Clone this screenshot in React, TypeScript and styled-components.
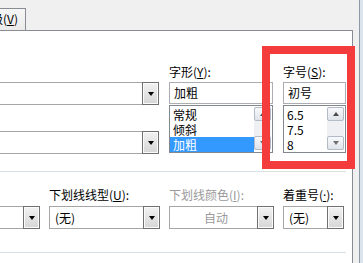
import React from "react";
import styled, { createGlobalStyle } from "styled-components";

const GlobalStyle = createGlobalStyle`
  html, body { margin: 0; padding: 0; background: #f0f0f0; }
  body {
    font-family: "Noto Sans CJK SC", "Noto Sans", sans-serif;
    font-size: 12px;
    color: #000;
  }
`;

const Frame = styled.div`
  position: relative;
  display: flex;
  width: 363px;
  height: 263px;
  overflow: hidden;
`;

const DialogArea = styled.div`
  display: flex;
  flex-direction: column;
  width: 359px;
  background: #f0f0f0;
`;

const EdgeLine = styled.div`
  width: 1px;
  background: #8e99a6;
`;

const Outside = styled.div`
  flex: 1;
  background: #dbe3ec;
`;

const TabStrip = styled.div`
  display: flex;
  align-items: flex-end;
  height: 30px;
`;

const Tab = styled.div`
  box-sizing: border-box;
  margin-left: -40px;
  width: 66px;
  height: 22px;
  padding-right: 7px;
  border: 1px solid #898c95;
  border-bottom: none;
  background: linear-gradient(#f6f6f6, #ebebeb);
  text-align: right;
  line-height: 20px;
  white-space: nowrap;
`;

const Panel = styled.div`
  flex: 1;
  margin-right: 6px;
  background: #fff;
  border-top: 1px solid #898c95;
  border-right: 1px solid #898c95;
  overflow: hidden;
`;

const Content = styled.div`
  margin-left: -100px;
  width: 446px;
  padding-top: 33px;
`;

const FontRow = styled.div`
  display: grid;
  grid-template-columns: 259px 104px 63px;
  column-gap: 10px;
`;

const EffectsRow = styled.div`
  display: grid;
  grid-template-columns: 140px 111px 105px 61px;
  column-gap: 9px;
  margin-top: 15px;
`;

const Field = styled.div`
  display: flex;
  flex-direction: column;
`;

const Label = styled.div<{ $disabled?: boolean; $gap?: number }>`
  height: 16px;
  line-height: 16px;
  white-space: nowrap;
  margin-bottom: ${(p) => p.$gap ?? 2}px;
  color: ${(p) => (p.$disabled ? "#9a9a9a" : "#000")};
`;

const Combo = styled.div<{ $disabled?: boolean }>`
  box-sizing: border-box;
  display: flex;
  height: 23px;
  border: 1px solid #a6a6a6;
  background: #fff;
  color: ${(p) => (p.$disabled ? "#9a9a9a" : "#000")};
`;

const ComboText = styled.div<{ $center?: boolean }>`
  flex: 1;
  padding-left: 5px;
  line-height: 21px;
  text-align: ${(p) => (p.$center ? "center" : "left")};
  white-space: nowrap;
`;

const DropButton = styled.div`
  box-sizing: border-box;
  display: flex;
  align-items: center;
  justify-content: center;
  width: 17px;
  margin: -1px -1px -1px 0;
  border: 1px solid #707070;
  box-shadow: inset 0 0 0 1px #fbfbfb;
  background: linear-gradient(#f2f2f2, #d6d6d6);
`;

const Arrow = styled.div<{ $up?: boolean; $color?: string }>`
  width: 0;
  height: 0;
  border-left: 3.5px solid transparent;
  border-right: 3.5px solid transparent;
  ${(p) =>
    p.$up
      ? `border-bottom: 4px solid ${p.$color ?? "#000"};`
      : `border-top: 4px solid ${p.$color ?? "#000"};`}
`;

const TextBox = styled.div`
  box-sizing: border-box;
  height: 22px;
  padding-left: 4px;
  border: 1px solid #abadb3;
  line-height: 20px;
  margin-bottom: 1px;
`;

const ListBox = styled.div`
  box-sizing: border-box;
  display: flex;
  height: 48px;
  border: 1px solid #828790;
  background: #fff;
  overflow: hidden;
`;

const Items = styled.div`
  flex: 1;
  padding-top: 1px;
`;

const Item = styled.div<{ $selected?: boolean }>`
  height: 15px;
  line-height: 15px;
  padding-left: 3px;
  background: ${(p) => (p.$selected ? "#3399ff" : "transparent")};
  color: ${(p) => (p.$selected ? "#fff" : "#000")};
`;

const ScrollBar = styled.div`
  display: flex;
  flex-direction: column;
  justify-content: space-between;
  width: 17px;
  margin: 1px 1px 2px 0;
  background: #eef0f3;
`;

const ScrollBtn = styled.div`
  box-sizing: border-box;
  display: flex;
  align-items: center;
  justify-content: center;
  height: 14px;
  border: 1px solid #b3bcc6;
  border-radius: 2px;
  background: linear-gradient(#f7f9fb, #dfe4ea);
`;

const Separator = styled.div<{ $top: number }>`
  height: 1px;
  margin-top: ${(p) => p.$top}px;
  background: #d8e0e6;
`;

const Highlight = styled.div`
  position: absolute;
  left: 262px;
  top: 46px;
  width: 93px;
  height: 123px;
  box-sizing: border-box;
  border: 8px solid #f53c3c;
  pointer-events: none;
`;

const Key = styled.u<{ $latin?: boolean }>`
  ${(p) => (p.$latin ? `font-family: "Noto Sans", sans-serif;` : "")}
`;

const Drop = () => (
  <DropButton>
    <Arrow />
  </DropButton>
);

const Scroller = () => (
  <ScrollBar>
    <ScrollBtn>
      <Arrow $up $color="#4a4a4a" />
    </ScrollBtn>
    <ScrollBtn>
      <Arrow $color="#6e6e6e" />
    </ScrollBtn>
  </ScrollBar>
);

export default function App() {
  return (
    <>
      <GlobalStyle />
      <Frame>
        <DialogArea>
          <TabStrip>
            <Tab>
              高级(<Key>V</Key>)
            </Tab>
          </TabStrip>
          <Panel>
            <Content>
              <FontRow>
                <Field>
                  <Label>
                    中文字体(<Key>T</Key>):
                  </Label>
                  <Combo>
                    <ComboText>+中文正文</ComboText>
                    <Drop />
                  </Combo>
                  <Label $gap={10}>
                    西文字体(<Key>F</Key>):
                  </Label>
                  <Combo>
                    <ComboText>+西文正文</ComboText>
                    <Drop />
                  </Combo>
                </Field>

                <Field>
                  <Label>
                    字形(<Key>Y</Key>):
                  </Label>
                  <TextBox>加粗</TextBox>
                  <ListBox>
                    <Items>
                      <Item>常规</Item>
                      <Item>倾斜</Item>
                      <Item $selected>加粗</Item>
                    </Items>
                    <Scroller />
                  </ListBox>
                </Field>

                <Field>
                  <Label>
                    字号(<Key>S</Key>):
                  </Label>
                  <TextBox>初号</TextBox>
                  <ListBox>
                    <Items>
                      <Item>6.5</Item>
                      <Item>7.5</Item>
                      <Item>8</Item>
                    </Items>
                    <Scroller />
                  </ListBox>
                </Field>
              </FontRow>

              <Separator $top={17} />

              <EffectsRow>
                <Field>
                  <Label $gap={3}>
                    字体颜色(<Key>C</Key>):
                  </Label>
                  <Combo>
                    <ComboText $center>自动</ComboText>
                    <Drop />
                  </Combo>
                </Field>
                <Field>
                  <Label $gap={3}>
                    下划线线型(<Key>U</Key>):
                  </Label>
                  <Combo>
                    <ComboText>(无)</ComboText>
                    <Drop />
                  </Combo>
                </Field>
                <Field>
                  <Label $gap={3} $disabled>
                    下划线颜色(<Key>I</Key>):
                  </Label>
                  <Combo $disabled>
                    <ComboText $center>自动</ComboText>
                    <Drop />
                  </Combo>
                </Field>
                <Field>
                  <Label $gap={3}>
                    着重号(<Key $latin>·</Key>):
                  </Label>
                  <Combo>
                    <ComboText>(无)</ComboText>
                    <Drop />
                  </Combo>
                </Field>
              </EffectsRow>

              <Separator $top={23} />
            </Content>
          </Panel>
        </DialogArea>
        <EdgeLine />
        <Outside />
        <Highlight />
      </Frame>
    </>
  );
}
